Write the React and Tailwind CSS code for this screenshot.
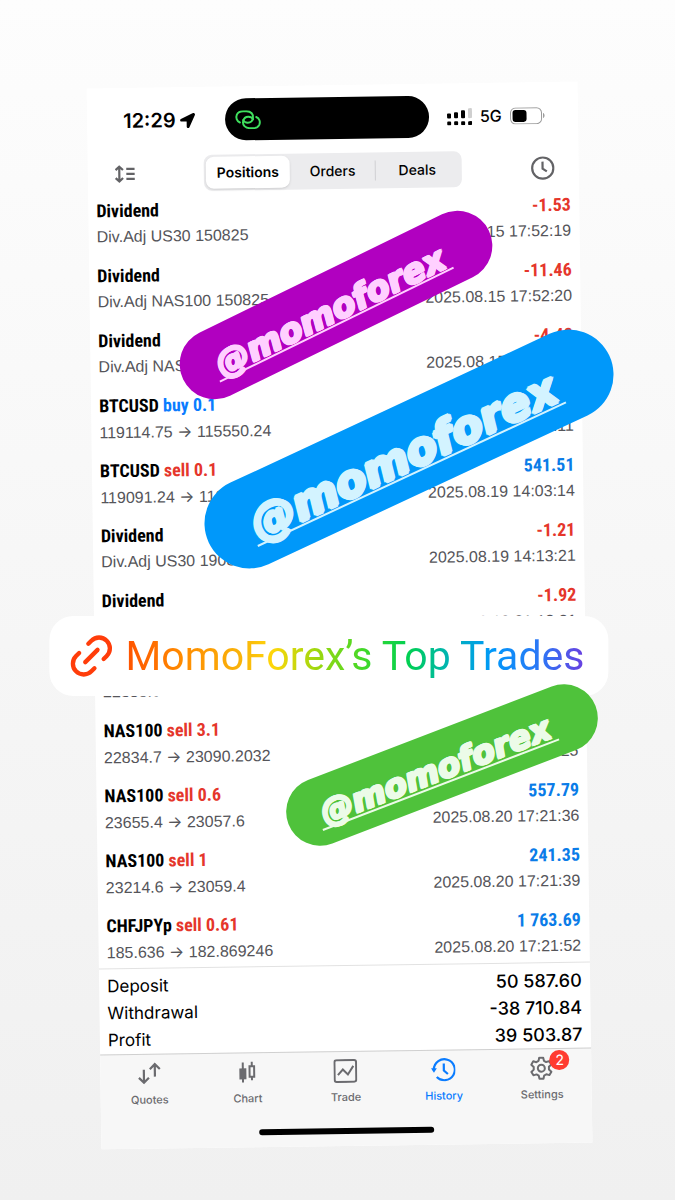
import { useState } from 'react'
import clsx from 'clsx'
import { FaLocationArrow } from 'react-icons/fa'
import { Link2 } from 'lucide-react'

const deals = [
  { symbol: 'Dividend', note: 'Div.Adj US30 150825', profit: '-1.53', time: '2025.08.15 17:52:19' },
  { symbol: 'Dividend', note: 'Div.Adj NAS100 150825', profit: '-11.46', time: '2025.08.15 17:52:20' },
  { symbol: 'Dividend', note: 'Div.Adj NAS100 150825', profit: '-4.48', time: '2025.08.15 17:52:20' },
  { symbol: 'BTCUSD', side: 'buy', lots: '0.1', open: '119114.75', close: '115550.24', profit: '-356.45', time: '2025.08.19 14:03:11' },
  { symbol: 'BTCUSD', side: 'sell', lots: '0.1', open: '119091.24', close: '113676.14', profit: '541.51', time: '2025.08.19 14:03:14' },
  { symbol: 'Dividend', note: 'Div.Adj US30 190825', profit: '-1.21', time: '2025.08.19 14:13:21' },
  { symbol: 'Dividend', note: 'Div.Adj NAS100 190825', profit: '-1.92', time: '2025.08.19 21:12:31' },
  { symbol: 'NAS100', side: 'sell', lots: '3.1', note: '22833.0', profit: '', time: '' },
  { symbol: 'NAS100', side: 'sell', lots: '3.1', open: '22834.7', close: '23090.2032', profit: '-791.7', time: '2025.08.20 17:21:25' },
  { symbol: 'NAS100', side: 'sell', lots: '0.6', open: '23655.4', close: '23057.6', profit: '557.79', time: '2025.08.20 17:21:36' },
  { symbol: 'NAS100', side: 'sell', lots: '1', open: '23214.6', close: '23059.4', profit: '241.35', time: '2025.08.20 17:21:39' },
  { symbol: 'CHFJPYp', side: 'sell', lots: '0.61', open: '185.636', close: '182.869246', profit: '1 763.69', time: '2025.08.20 17:21:52' },
]

const totals = [
  ['Deposit', '50 587.60'],
  ['Withdrawal', '-38 710.84'],
  ['Profit', '39 503.87'],
]

function HotspotIcon() {
  const loop = 'M14 37C4 33 1 22 5 13C9 5 16 3 24 3H34C48 3 57 13 54 25C52 34 45 38 38 38C31 38 26 34 24 30'
  return (
    <svg viewBox="0 0 78 58" className="h-[19px] w-[26px]" fill="none" stroke="#3fe05e" strokeWidth="6" strokeLinecap="round">
      <path d={loop} />
      <path d={loop} transform="rotate(180 39 29)" />
    </svg>
  )
}

function SignalIcon() {
  return (
    <svg viewBox="0 0 25 17" className="h-[17px] w-[25px]">
      <rect x="0" y="5" width="4" height="5" rx="1" />
      <rect x="7" y="4" width="4" height="6" rx="1" />
      <rect x="14" y="2" width="4" height="8" rx="1" />
      <rect x="21" y="0" width="4" height="10" rx="1" fill="#cfcfcf" />
      {[0, 7, 14, 21].map(x => (
        <rect key={x} x={x} y="13" width="4" height="4" rx="1" />
      ))}
    </svg>
  )
}

function BatteryIcon() {
  return (
    <svg viewBox="0 0 35 17" className="h-[17px] w-[35px]">
      <rect x="0.5" y="0.5" width="31" height="16" rx="5" fill="none" stroke="#9a9a9a" />
      <rect x="2.5" y="2.5" width="14" height="12" rx="3" />
      <path d="M33 6c2 .6 2 4.400 0 5z" fill="#9a9a9a" />
    </svg>
  )
}

function SortIcon() {
  return (
    <svg viewBox="0 0 20 18" className="h-[18px] w-5" fill="none" stroke="#636366" strokeWidth="2.2">
      <path d="M4.500 2v14M0.800 5l3.700-3.400L8.200 5M0.800 13l3.700 3.400L8.200 13" />
      <path d="M11.500 4H20M11.500 9H20M11.500 14H20" />
    </svg>
  )
}

function ClockIcon() {
  return (
    <svg viewBox="0 0 24 24" className="size-6" fill="none" stroke="#636366" strokeWidth="2.2">
      <circle cx="12" cy="12" r="10.600" />
      <path d="M11.800 5.500v7l4.200 2.800" />
    </svg>
  )
}

function QuotesIcon() {
  return (
    <svg viewBox="0 0 24 24" className="size-6" fill="none" stroke="currentColor" strokeWidth="2.2">
      <path d="M6.500 8V21M1.500 16l5 5 5-5M17.500 15V2.500M12.500 7.500l5-5 5 5" />
    </svg>
  )
}

function CandlesIcon() {
  return (
    <svg viewBox="0 0 24 24" className="size-6" fill="none" stroke="currentColor" strokeWidth="2">
      <path d="M7.500 2v20" />
      <rect x="5" y="9" width="5" height="9" fill="currentColor" />
      <path d="M16.500 1.500V6M16.500 16.500V20" />
      <rect x="14.200" y="6" width="4.600" height="10.500" />
    </svg>
  )
}

function TradeIcon() {
  return (
    <svg viewBox="0 0 24 24" className="size-6" fill="none" stroke="currentColor" strokeWidth="2">
      <rect x="1.200" y="1.200" width="21.600" height="21.600" rx="2" />
      <path d="M4.500 16l5-5.500 5 5L20 7" />
    </svg>
  )
}

function HistoryIcon() {
  return (
    <svg viewBox="0 0 24 24" className="size-6" fill="none" stroke="currentColor" strokeWidth="2.2">
      <path d="M2.500 11.500A10.500 10.500 0 1 1 5.300 19.300" />
      <path d="M12.500 6v7l4 3.500" />
      <path d="M-.5 10.500h6L2.600 15z" fill="currentColor" stroke="none" />
    </svg>
  )
}

function GearIcon() {
  return (
    <svg viewBox="0 0 24 24" className="size-6" fill="none" stroke="currentColor" strokeWidth="2" strokeLinejoin="round">
      <path d="M10 1.500h4l.7 3.100 2.200 1.300 3.100-.9 2 3.400-2.400 2.300v2.600l2.400 2.300-2 3.400-3.100-.9-2.200 1.300-.7 3.100h-4l-.7-3.100-2.200-1.300-3.100.9-2-3.400 2.400-2.300v-2.600L2 8.400 4 5l3.100.9 2.200-1.300z" />
      <circle cx="12" cy="12" r="3.500" />
    </svg>
  )
}

const tabs = [
  { label: 'Quotes', Icon: QuotesIcon },
  { label: 'Chart', Icon: CandlesIcon },
  { label: 'Trade', Icon: TradeIcon },
  { label: 'History', Icon: HistoryIcon },
  { label: 'Settings', Icon: GearIcon, badge: 2 },
]

function StatusBar() {
  return (
    <div className="flex h-[42px] items-center pr-[11px]">
      <div className="flex flex-1 items-center gap-1 pl-9 text-xl font-semibold">
        12:29
        <FaLocationArrow size={15} />
      </div>
      <div className="flex h-full w-[204px] items-center rounded-full bg-black pl-2.5">
        <HotspotIcon />
      </div>
      <div className="flex flex-1 items-center gap-2 pr-[18px] pl-[18px] text-base font-medium">
        <SignalIcon />
        5G
        <BatteryIcon />
      </div>
    </div>
  )
}

function DealRow({ deal }) {
  return (
    <li className="flex h-[65px] justify-between px-2 pt-1.5 last:h-[61px]">
      <div>
        <p className="font-['Roboto_Condensed','Liberation_Sans_Narrow',sans-serif] text-lg leading-[26px] font-bold">
          {deal.symbol}
          {deal.side && (
            <span className={deal.side === 'buy' ? 'text-[#0a7cff]' : 'text-[#e5362b]'}>
              {' '}{deal.side} {deal.lots}
            </span>
          )}
        </p>
        <p className="text-base leading-[26px] text-[#55555a]">
          {deal.note}
          {deal.open && (
            <>
              {deal.open} <span className="font-['Inter',sans-serif]">→</span> {deal.close}
            </>
          )}
        </p>
      </div>
      <div className="text-right">
        <p
          className={clsx(
            "font-['Roboto_Condensed','Liberation_Sans_Narrow',sans-serif] text-lg leading-[26px] font-bold",
            deal.profit.startsWith('-') ? 'text-[#e5362b]' : 'text-[#0a7ce8]'
          )}
        >
          {deal.profit}
        </p>
        <p className="text-base leading-[26px] text-[#55555a]">{deal.time}</p>
      </div>
    </li>
  )
}

function Phone() {
  const [segment, setSegment] = useState('Positions')
  const [tab, setTab] = useState('History')

  return (
    <div className="rotate-[-0.8deg] bg-white pt-3 font-['Inter',sans-serif] text-black">
      <StatusBar />

      {/* Header */}
      <div className="mt-[14px] flex h-9 items-center justify-between pr-6 pl-[27px]">
        <button aria-label="Sort"><SortIcon /></button>
        <div className="flex h-full w-[258px] rounded-lg bg-[#ececee] p-0.5">
          {['Positions', 'Orders', 'Deals'].map(s => (
            <button
              key={s}
              onClick={() => setSegment(s)}
              className={clsx(
                'flex-1 text-sm',
                segment === s ? 'rounded-lg bg-white font-semibold shadow-sm' : 'font-medium',
                s === 'Deals' && 'relative before:absolute before:inset-y-1.5 before:left-0 before:w-px before:bg-[#d0d0d3]'
              )}
            >
              {s}
            </button>
          ))}
        </div>
        <button aria-label="Period"><ClockIcon /></button>
      </div>

      {/* Deals */}
      <ul className="font-['Liberation_Sans',sans-serif]">
        {deals.map((d, i) => (
          <DealRow key={i} deal={d} />
        ))}
      </ul>

      <dl className="border-t border-[#e2e2e2] px-2 pt-1 leading-[27px]">
        {totals.map(([label, value]) => (
          <div key={label} className="flex justify-between">
            <dt className="text-[17px] leading-[27px]">{label}</dt>
            <dd className="text-lg leading-[27px] font-medium">{value}</dd>
          </div>
        ))}
      </dl>

      {/* Tab bar */}
      <nav className="border-t border-[#d0d0d0] bg-[#f7f7f7] pt-[7px] pb-2">
        <div className="flex">
          {tabs.map(({ label, Icon, badge }) => (
            <button
              key={label}
              onClick={() => setTab(label)}
              className={clsx(
                'flex flex-1 flex-col items-center gap-1.5 text-[11px] leading-4 font-medium',
                tab === label ? 'text-[#0a7cff]' : 'text-[#6b6b6f]'
              )}
            >
              <span className="relative">
                <Icon />
                {badge && (
                  <span className="absolute -top-1.5 left-5 flex size-5 items-center justify-center rounded-full bg-[#ff3b30] text-sm font-normal text-white">
                    {badge}
                  </span>
                )}
              </span>
              {label}
            </button>
          ))}
        </div>
        <div className="mx-auto mt-[23px] mb-1 h-1.5 w-[175px] rounded-full bg-black" />
      </nav>
    </div>
  )
}

function Mention({ className, textClass }) {
  return (
    <a
      href="#momoforex"
      className={clsx(
        "absolute flex -translate-x-1/2 -translate-y-1/2 items-center justify-center rounded-full pr-4 font-['DejaVu_Sans',sans-serif] font-bold italic",
        className
      )}
    >
      <span className={clsx('border-b-2', textClass)}>@momoforex</span>
    </a>
  )
}

export default function App() {
  return (
    <main className="min-h-screen overflow-hidden bg-linear-to-b from-[#fdfdfd] to-[#f0f0f0] pt-[85px] pb-[55px] pl-[3px]">
      <div className="relative mx-auto w-[73%]">
        <Phone />

        <Mention
          className="top-[220px] left-[calc(50%-3px)] h-[70px] w-[340px] rotate-[-26deg] bg-[#b100c0] text-[34px] leading-[28px] text-[#ffd0ff]"
          textClass="border-[#ffd0ff] px-1 pt-2 [text-shadow:1px_0,-1px_0,0_1px,0_-1px,1px_1px,-1px_-1px,1px_-1px,-1px_1px]"
        />
        <Mention
          className="top-[364px] left-[calc(50%+70px)] h-[90px] w-[442px] rotate-[-25deg] bg-[#0098fa] text-[45px] leading-[36px] text-[#d3f3ff]"
          textClass="border-[#d3f3ff] px-1 pt-3 [text-shadow:2px_0,-2px_0,0_2px,0_-2px,1px_1px,-1px_-1px,1px_-1px,-1px_1px]"
        />

        <a
          href="#top-trades"
          className="absolute top-[571px] left-[calc(50%-10px)] flex h-20 w-[114%] -translate-x-1/2 -translate-y-1/2 items-center justify-center gap-2 rounded-3xl bg-white pr-2"
        >
          <Link2 size={52} strokeWidth={2} className="-rotate-45 text-[#ff3d0a]" />
          <span className="bg-linear-[90deg,#ff5200,#ff8a00_12%,#f9b60a_26%,#ffd60a_32%,#9bd80f_42%,#2fd82f_54%,#00cf55_62%,#00b5b0_70%,#0098fa_80%,#2f74f5_91%,#6a3fe0] bg-clip-text font-['Roboto',sans-serif] text-[41px] leading-[56px] whitespace-nowrap text-transparent">
            MomoForex’s Top Trades
          </span>
        </a>

        <Mention
          className="top-[680px] left-[calc(50%+103px)] h-[68px] w-[329px] rotate-[-21deg] bg-[#4fc23b] text-[33px] leading-[28px] text-[#ecfbe8]"
          textClass="border-[#ecfbe8] px-1 pt-2 [text-shadow:1px_0,-1px_0,0_1px,0_-1px,1px_1px,-1px_-1px,1px_-1px,-1px_1px]"
        />
      </div>
    </main>
  )
}
